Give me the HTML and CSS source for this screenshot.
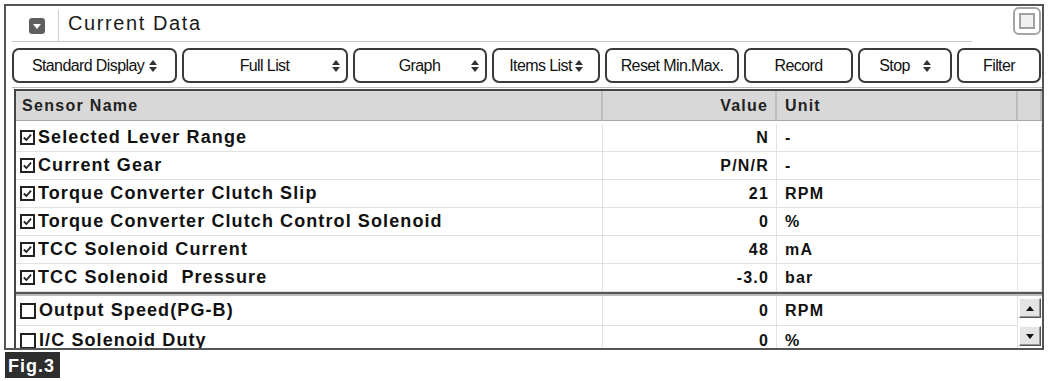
FILE: index.html
```html
<!DOCTYPE html>
<html lang="en">
<head>
    <meta charset="UTF-8">
    <title>Current Data</title>
    <link rel="stylesheet" href="styles.css">
</head>
<body>
    <div class="window">
        <div class="titlebar">
            <div class="title-left">
                <span class="collapse">
                    <svg width="16" height="16" viewBox="0 0 16 16"><rect x="0" y="0" width="16" height="16" rx="3" fill="#5f5f5f"/><polygon points="4,6 12,6 8,11" fill="#fff"/></svg>
                </span>
                <span class="title">Current Data</span>
            </div>
            <span class="maximize"><span class="maximize-inner"></span></span>
        </div>

        <div class="toolbar">
            <button class="btn w1">Standard Display <svg class="spin" width="8" height="12" viewBox="0 0 8 12"><polygon points="0,5 4,0 8,5"/><polygon points="0,7 8,7 4,12"/></svg></button>
            <button class="btn w2 wide"><span class="label">Full List</span><svg class="spin" width="8" height="12" viewBox="0 0 8 12"><polygon points="0,5 4,0 8,5"/><polygon points="0,7 8,7 4,12"/></svg></button>
            <button class="btn w3 wide"><span class="label">Graph</span><svg class="spin" width="8" height="12" viewBox="0 0 8 12"><polygon points="0,5 4,0 8,5"/><polygon points="0,7 8,7 4,12"/></svg></button>
            <button class="btn w4 tight">Items List<svg class="spin" width="8" height="12" viewBox="0 0 8 12"><polygon points="0,5 4,0 8,5"/><polygon points="0,7 8,7 4,12"/></svg></button>
            <button class="btn w5">Reset Min.Max.</button>
            <button class="btn w6">Record</button>
            <button class="btn w7 gap">Stop<svg class="spin" width="8" height="12" viewBox="0 0 8 12"><polygon points="0,5 4,0 8,5"/><polygon points="0,7 8,7 4,12"/></svg></button>
            <button class="btn w8">Filter</button>
        </div>

        <div class="table">
            <div class="row head">
                <div class="cell name">Sensor Name</div>
                <div class="cell value">Value</div>
                <div class="cell unit">Unit</div>
                <div class="cell"></div>
            </div>

            <div class="group">
                <div class="row">
                    <div class="cell name"><svg class="check" width="15" height="15" viewBox="0 0 15 15"><rect x="1" y="1" width="13" height="13" fill="#fff" stroke="#222" stroke-width="2"/><path d="M3.8 7.5 L6.4 10 L11 4.6" fill="none" stroke="#222" stroke-width="1.8"/></svg>Selected Lever Range</div>
                    <div class="cell value">N</div>
                    <div class="cell unit">-</div>
                    <div class="cell"></div>
                </div>
                <div class="row">
                    <div class="cell name"><svg class="check" width="15" height="15" viewBox="0 0 15 15"><rect x="1" y="1" width="13" height="13" fill="#fff" stroke="#222" stroke-width="2"/><path d="M3.8 7.5 L6.4 10 L11 4.6" fill="none" stroke="#222" stroke-width="1.8"/></svg>Current Gear</div>
                    <div class="cell value">P/N/R</div>
                    <div class="cell unit">-</div>
                    <div class="cell"></div>
                </div>
                <div class="row">
                    <div class="cell name"><svg class="check" width="15" height="15" viewBox="0 0 15 15"><rect x="1" y="1" width="13" height="13" fill="#fff" stroke="#222" stroke-width="2"/><path d="M3.8 7.5 L6.4 10 L11 4.6" fill="none" stroke="#222" stroke-width="1.8"/></svg>Torque Converter Clutch Slip</div>
                    <div class="cell value">21</div>
                    <div class="cell unit">RPM</div>
                    <div class="cell"></div>
                </div>
                <div class="row">
                    <div class="cell name"><svg class="check" width="15" height="15" viewBox="0 0 15 15"><rect x="1" y="1" width="13" height="13" fill="#fff" stroke="#222" stroke-width="2"/><path d="M3.8 7.5 L6.4 10 L11 4.6" fill="none" stroke="#222" stroke-width="1.8"/></svg>Torque Converter Clutch Control Solenoid</div>
                    <div class="cell value">0</div>
                    <div class="cell unit">%</div>
                    <div class="cell"></div>
                </div>
                <div class="row">
                    <div class="cell name"><svg class="check" width="15" height="15" viewBox="0 0 15 15"><rect x="1" y="1" width="13" height="13" fill="#fff" stroke="#222" stroke-width="2"/><path d="M3.8 7.5 L6.4 10 L11 4.6" fill="none" stroke="#222" stroke-width="1.8"/></svg>TCC Solenoid Current</div>
                    <div class="cell value">48</div>
                    <div class="cell unit">mA</div>
                    <div class="cell"></div>
                </div>
                <div class="row">
                    <div class="cell name"><svg class="check" width="15" height="15" viewBox="0 0 15 15"><rect x="1" y="1" width="13" height="13" fill="#fff" stroke="#222" stroke-width="2"/><path d="M3.8 7.5 L6.4 10 L11 4.6" fill="none" stroke="#222" stroke-width="1.8"/></svg>TCC Solenoid&nbsp; Pressure</div>
                    <div class="cell value">-3.0</div>
                    <div class="cell unit">bar</div>
                    <div class="cell"></div>
                </div>
            </div>

            <div class="group second">
                <div class="cell name"><svg class="check" width="16" height="16" viewBox="0 0 16 16"><rect x="1" y="1" width="14" height="14" fill="#fff" stroke="#222" stroke-width="2"/></svg>Output Speed(PG-B)</div>
                <div class="cell value">0</div>
                <div class="cell unit">RPM</div>
                <div class="scrollbar">
                    <span class="scroll-btn"><svg width="8" height="5" viewBox="0 0 8 5"><polygon points="0,5 4,0 8,5"/></svg></span>
                    <span class="scroll-btn"><svg width="8" height="5" viewBox="0 0 8 5"><polygon points="0,0 8,0 4,5"/></svg></span>
                </div>
                <div class="cell name"><svg class="check" width="16" height="16" viewBox="0 0 16 16"><rect x="1" y="1" width="14" height="14" fill="#fff" stroke="#222" stroke-width="2"/></svg>I/C Solenoid Duty</div>
                <div class="cell value">0</div>
                <div class="cell unit">%</div>
            </div>
        </div>
    </div>

    <div class="fig">Fig.3</div>
</body>
</html>
```

FILE: styles.css
```css
body {
    margin: 0;
    background: #fff;
    color: #111;
    font-family: "Liberation Sans", Arial, sans-serif;
}

.window {
    box-sizing: border-box;
    width: 1040px;
    height: 346px;
    margin: 4px 0 0 4px;
    border: 2px solid #555;
    overflow: hidden;
}

/* title bar */
.titlebar {
    display: flex;
    justify-content: space-between;
    align-items: flex-start;
    padding: 0 1px 0 6px;
}

.title-left {
    display: flex;
    align-items: center;
    width: 960px;
    height: 35px;
    border-bottom: 1px solid #c8c8c8;
}

.collapse {
    display: flex;
    align-items: center;
    height: 31px;
    margin-left: 17px;
    padding-right: 13px;
    margin-top: 4px;
    border-right: 1px solid #d0d0d0;
}

.title {
    margin-left: 9px;
    font-size: 20px;
    letter-spacing: 1.6px;
    color: #1a1a1a;
}

.maximize {
    box-sizing: border-box;
    width: 28px;
    height: 28px;
    margin-top: 1px;
    padding: 4px;
    border: 2px solid #a4a4a4;
    border-radius: 6px;
}

.maximize-inner {
    display: block;
    box-sizing: border-box;
    width: 100%;
    height: 100%;
    border: 2px solid #a0a0a0;
    background: #f0f0f0;
}

/* toolbar buttons */
.toolbar {
    display: flex;
    gap: 5px;
    margin: 6px 0 0 6px;
    padding-bottom: 4px;
    border-bottom: 1px solid #bbb;
}

.btn {
    display: flex;
    align-items: center;
    justify-content: center;
    gap: 5px;
    height: 35px;
    padding: 0 6px;
    background: #fff;
    border: 2px solid #3a3a3a;
    border-radius: 7px;
    font-family: "Liberation Sans", Arial, sans-serif;
    font-size: 16px;
    letter-spacing: -0.6px;
    color: #111;
}

.btn.wide .label {
    flex: 1;
    text-align: center;
    padding-left: 12px;
}

.btn.tight {
    gap: 3px;
}

.btn.gap {
    gap: 13px;
}

.spin {
    fill: #333;
    flex: none;
}

.w1 { width: 165px; }
.w2 { width: 166px; }
.w3 { width: 134px; }
.w4 { width: 108px; }
.w5 { width: 134px; }
.w6 { width: 109px; }
.w7 { width: 94px; }
.w8 { width: 84px; }

/* data table */
.table {
    margin: 1px 0 0 8px;
    border-top: 2px solid #444;
    border-left: 2px solid #444;
}

.row, .group.second {
    display: grid;
    grid-template-columns: 587px 174px 241px 1fr;
}

.row {
    height: 28px;
    border-bottom: 1px solid #e0e0e0;
    box-sizing: border-box;
}

.cell {
    display: flex;
    align-items: center;
    border-right: 1px solid #e2e2e2;
    font-weight: bold;
    font-size: 16px;
    letter-spacing: 1.2px;
    white-space: nowrap;
}

.row.head {
    height: 30px;
    margin-bottom: 3px;
    background: #d8d8d8;
    border-bottom: 1px solid #a8a8a8;
}

.row.head .cell {
    border-right: 2px solid #bdbdbd;
    color: #222;
}

.row.head .name {
    padding-left: 6px;
    font-size: 16px;
    letter-spacing: 1.3px;
}

.name {
    padding-left: 4px;
    font-size: 18px;
    letter-spacing: 1.1px;
}

.check {
    flex: none;
    margin-right: 3px;
}

.value {
    justify-content: flex-end;
    padding-right: 7px;
}

.unit {
    padding-left: 8px;
}

.group {
    border-bottom: 2px solid #555;
    box-shadow: 0 2px 0 #bbb;
    margin-bottom: 2px;
}

.group.second {
    grid-template-rows: 30px 30px;
    border: none;
    box-shadow: none;
    margin: 0;
}

.group.second .cell {
    border-bottom: 1px solid #e0e0e0;
}

.scrollbar {
    grid-row: 1 / 3;
    grid-column: 4;
    display: flex;
    flex-direction: column;
    gap: 8px;
    padding: 2px 0 0 1px;
}

.scroll-btn {
    display: flex;
    align-items: center;
    justify-content: center;
    box-sizing: border-box;
    width: 22px;
    height: 20px;
    background: #e4e4e4;
    border: 1px solid;
    border-color: #fafafa #555 #555 #fafafa;
    box-shadow: inset -1px -1px 0 #999;
    fill: #111;
}

.fig {
    box-sizing: border-box;
    width: 55px;
    height: 26px;
    margin: 2px 0 0 5px;
    padding: 4px 0 0 3px;
    background: #2e2e2e;
    color: #fff;
    font-weight: bold;
    font-size: 18px;
    letter-spacing: 1px;
    line-height: 20px;
}
```
